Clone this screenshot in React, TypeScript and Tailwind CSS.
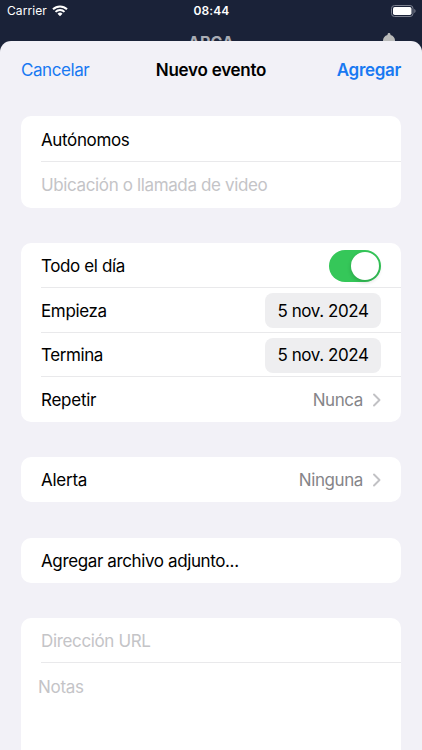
import type { ReactNode } from "react";

function Group({ className = "", children }: { className?: string; children: ReactNode }) {
  return <section className={`mx-[21px] overflow-hidden rounded-[10px] bg-white pl-5 ${className}`}>{children}</section>;
}

function Row({ className = "", divider = false, children }: { className?: string; divider?: boolean; children: ReactNode }) {
  return (
    <div className={`flex items-center justify-between pr-5 ${divider ? "border-b border-[#e9e9eb]" : ""} ${className}`}>
      {children}
    </div>
  );
}

function DatePill({ text }: { text: string }) {
  return (
    <button className="h-[35px] w-[116px] rounded-[8px] bg-[#eeeef0] text-center tracking-[-0.42px]">{text}</button>
  );
}

function Chevron() {
  return (
    <svg width="9" height="14" viewBox="0 0 9 14" fill="none" stroke="#c1c1c4" strokeWidth="1.900" strokeLinecap="round" strokeLinejoin="round">
      <path d="M2 1.500 7.500 7 2 12.500" />
    </svg>
  );
}

function Value({ text }: { text: string }) {
  return (
    <span className="flex items-center gap-[9px] text-[#858589]">
      <span className="tracking-[-0.4px]">{text}</span>
      <Chevron />
    </span>
  );
}

export default function App() {
  return (
    <div className="flex h-[750px] w-[422px] flex-col overflow-hidden bg-[#1a2238] font-[Inter,'Liberation_Sans',sans-serif] text-[17px] leading-[22px] text-black">
      <header className="h-[41px] shrink-0 overflow-hidden text-white">
        <div className="grid h-[22px] grid-cols-3 items-center pl-[7px] pr-[6px] text-[12px] leading-[22px]">
          <div className="flex items-center gap-[5px]">
            <span className="tracking-[0.08px]">Carrier</span>
            <svg width="16" height="12" viewBox="0 0 16 12" fill="none" stroke="white">
              <path d="M1 4.300a10 10 0 0 1 14 0" strokeWidth="2" />
              <path d="M3.500 6.900a6.400 6.400 0 0 1 9 0" strokeWidth="1.900" />
              <path d="M8 11.300 5.500 8.800a3.600 3.600 0 0 1 5 0z" fill="white" stroke="none" />
            </svg>
          </div>
          <span className="text-center font-semibold tracking-[0.1px]">08:44</span>
          <svg className="-mt-px justify-self-end" width="25" height="12" viewBox="0 0 25 12" fill="none">
            <rect x=".5" y=".5" width="21.500" height="11" rx="3" stroke="#7c8190" />
            <rect x="2" y="2" width="18.500" height="8" rx="1.700" fill="white" />
            <path d="M23.300 4v4c.8-.3 1.200-1.100 1.200-2s-.4-1.700-1.200-2z" fill="#7c8190" />
          </svg>
        </div>
        <div className="grid grid-cols-3 pt-[9px] text-[#a9acb4]">
          <span className="col-start-2 text-center text-[16px] font-bold tracking-[0.1px]">ARCA</span>
          <svg className="mr-[26px] mt-[2px] justify-self-end" width="14" height="16" viewBox="0 0 14 16" fill="#b9bab9">
            <path d="M7 0c.9 0 1.500.7 1.500 1.500v.4C11.500 2.600 13 5 13 7.500V11l1 2H0l1-2V7.500C1 5 2.500 2.600 5.500 1.900v-.4C5.500.7 6.100 0 7 0z" />
          </svg>
        </div>
      </header>
      <main className="min-h-0 flex-1 overflow-hidden rounded-t-[11px] bg-[#f2f1f7]">
        <nav className="grid h-[75px] grid-cols-[1fr_auto_1fr] items-start px-[21px] pt-[18px]">
          <button className="justify-self-start tracking-[-0.43px] text-[#1879f2]">Cancelar</button>
          <h1 className="font-semibold tracking-[-0.25px]">Nuevo evento</h1>
          <button className="justify-self-end font-semibold tracking-[-0.3px] text-[#1879f2]">Agregar</button>
        </nav>
        <Group>
          <Row className="h-[46px] pt-[2px]" divider><span className="tracking-[-0.36px]">Autónomos</span></Row>
          <Row className="h-[46px]"><span className="tracking-[-0.37px] text-[#c4c4c7]">Ubicación o llamada de video</span></Row>
        </Group>
        <Group className="mt-[35px]">
          <Row className="h-[45px] pt-[2px]" divider>
            <span className="tracking-[-0.38px]">Todo el día</span>
            <button role="switch" aria-checked="true" aria-label="Todo el día" className="flex h-8 w-[52px] items-center justify-end rounded-full bg-[#35c759] p-[2px]">
              <span className="size-7 rounded-full bg-white shadow-[0_2px_4px_rgba(0,0,0,0.18)]" />
            </button>
          </Row>
          <Row className="h-[45px] pt-px" divider><span className="tracking-[-0.36px]">Empieza</span><DatePill text="5 nov. 2024" /></Row>
          <Row className="h-[44px] pt-px" divider><span className="tracking-[-0.4px]">Termina</span><DatePill text="5 nov. 2024" /></Row>
          <Row className="h-[45px]"><span className="tracking-[-0.25px]">Repetir</span><Value text="Nunca" /></Row>
        </Group>
        <Group className="mt-[35px]">
          <Row className="h-[45px] pt-px"><span className="tracking-[-0.25px]">Alerta</span><Value text="Ninguna" /></Row>
        </Group>
        <Group className="mt-9">
          <Row className="h-[45px]"><span className="tracking-[-0.38px]">Agregar archivo adjunto...</span></Row>
        </Group>
        <Group className="mt-[35px] h-[200px]">
          <Row className="h-[45px] pt-[2px]" divider><span className="tracking-[-0.35px] text-[#c4c4c7]">Dirección URL</span></Row>
          <p className="-ml-[3px] pt-[13px] tracking-[-0.3px] text-[#c4c4c7]">Notas</p>
        </Group>
      </main>
    </div>
  );
}
